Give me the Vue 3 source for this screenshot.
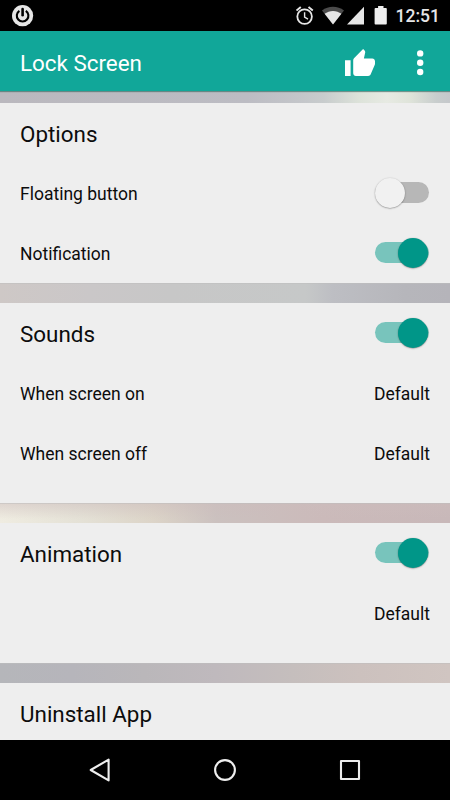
<script setup>

    import { reactive } from 'vue';

    const secciones = reactive([
        {
            clase: 'seccion--opciones',
            titulo: 'Options',
            filas: [
                { texto: 'Floating button', activo: false },
                { texto: 'Notification', activo: true }
            ]
        },
        {
            clase: 'seccion--sonidos',
            titulo: 'Sounds',
            activo: true,
            filas: [
                { texto: 'When screen on', valor: 'Default' },
                { texto: 'When screen off', valor: 'Default' }
            ]
        },
        {
            clase: 'seccion--animacion',
            titulo: 'Animation',
            activo: true,
            filas: [
                { texto: '', valor: 'Default' }
            ]
        },
        {
            clase: 'seccion--desinstalar',
            titulo: 'Uninstall App',
            filas: []
        }
    ]);

    function cambiar(item){
        item.activo = !item.activo;
    }

</script>
<template>
    <div class="pantalla">
        <div class="estado">
            <svg class="estado__power" width="22" height="22" viewBox="0 0 22 22">
                <circle cx="10.6" cy="10.7" r="10.6" fill="#e6e6e6" />
                <path d="M7.4 5.9A5.8 5.8 0 1 0 13.8 5.9" fill="none" stroke="#000" stroke-width="2.1" />
                <path d="M10.6 4V10.2" stroke="#000" stroke-width="2.6" stroke-linecap="round" />
            </svg>
            <div class="estado__iconos">
                <svg width="18" height="19" viewBox="0 0 18 19" fill="none" stroke="#e6e6e6">
                    <circle cx="8.6" cy="10.6" r="7.3" stroke-width="1.8" />
                    <path d="M8.6 6.2V11L12 13.1" stroke-width="1.4" />
                    <path d="M.5 4.5L4.8 .9M16.8 4.5L12.5 .9" stroke-width="1.9" />
                </svg>
                <svg class="estado__wifi" width="22" height="19" viewBox="0 0 22 19">
                    <path d="M0 4.4C6.4-.6 15.6-.6 22 4.4L11 18.2Z" fill="#4b4b4b" />
                    <path d="M2.6 7.8C7.4 3.9 14.6 3.9 19.4 7.8L11 18.4Z" fill="#e6e6e6" />
                </svg>
                <svg class="estado__red" width="18" height="19" viewBox="0 0 18 19">
                    <path d="M17 .8V18.6H0Z" fill="#e6e6e6" />
                </svg>
                <svg class="estado__bateria" width="14" height="19" viewBox="0 0 14 19">
                    <path d="M4.1 0H9.5V2H12Q12.8 2 12.8 3V17.6Q12.8 18.6 12 18.6H1.5Q.6 18.6 .6 17.6V3Q.6 2 1.5 2H4.1Z" fill="#eee" />
                </svg>
                <span class="estado__hora">12:51</span>
            </div>
        </div>
        <div class="barra">
            <h1>Lock Screen</h1>
            <svg class="barra__like" width="30" height="28" viewBox="0 0 30 28" fill="#fff">
                <path d="M0 11.2H5.6V27H0ZM30 12.3C30 10.8 28.8 9.6 27.3 9.6H18.9L20.2 3.4V3C20.2 2.4 20 1.9 19.6 1.5L18.1 0L9 9.3C8.5 9.8 8.2 10.5 8.2 11.2V24.3C8.2 25.8 9.4 27 10.9 27H23.2C24.3 27 25.3 26.3 25.7 25.3L29.8 15.7C29.9 15.4 30 15.1 30 14.7Z" />
            </svg>
            <svg class="barra__menu" width="8" height="28" viewBox="0 0 8 28" fill="#fff">
                <circle cx="4.2" cy="4.4" r="3.2" />
                <circle cx="4.2" cy="13.7" r="3.2" />
                <circle cx="4.2" cy="23" r="3.2" />
            </svg>
        </div>
        <div class="contenido">
            <template v-for="sec in secciones" :key="sec.titulo">
                <div class="franja" :class="sec.clase + '-franja'"></div>
                <div class="seccion" :class="sec.clase">
                    <div class="fila">
                        <h2>{{ sec.titulo }}</h2>
                        <button
                            v-if="sec.activo !== undefined" class="switch"
                            :class="{ 'switch--activo': sec.activo }" @click="cambiar(sec)"
                            ></button>
                    </div>
                    <div class="fila" v-for="(fila, i) in sec.filas" :key="i">
                        <span>{{ fila.texto }}</span>
                        <span v-if="fila.valor">{{ fila.valor }}</span>
                        <button
                            v-else class="switch"
                            :class="{ 'switch--activo': fila.activo }" @click="cambiar(fila)"
                            ></button>
                    </div>
                </div>
            </template>
        </div>
        <div class="navegacion">
            <svg width="24" height="26" viewBox="0 0 24 26">
                <path d="M20.6 2.6V23.4L2.7 13Z" fill="none" stroke="#eee" stroke-width="2.1" stroke-linejoin="round" />
            </svg>
            <svg width="24" height="26" viewBox="0 0 24 26">
                <circle cx="12" cy="13" r="9.9" fill="none" stroke="#eee" stroke-width="2.1" />
            </svg>
            <svg width="24" height="26" viewBox="0 0 24 26">
                <rect x="3" y="4" width="18" height="18" fill="none" stroke="#eee" stroke-width="2.1" stroke-linejoin="round" />
            </svg>
        </div>
    </div>
</template>
<style>
    body{
        margin: 0;
        background-color: #000;
    }
</style>
<style scoped>
    .pantalla{
        display: flex;
        flex-direction: column;
        width: 450px;
        height: 800px;
        overflow: hidden;
        font-family: Roboto, "Liberation Sans", sans-serif;
        font-size: 17.5px;
        color: #0c0c0c;
    }
    svg{
        display: block;
        flex: none;
    }
    .estado{
        display: flex;
        justify-content: space-between;
        flex: none;
        box-sizing: border-box;
        height: 31px;
        padding: 5px 10px 0 12px;
        background-color: #000;
    }
    .estado__iconos{
        display: flex;
        align-items: flex-start;
        padding-top: 1px;
    }
    .estado__wifi{
        margin-left: 8px;
    }
    .estado__red{
        margin-left: 3px;
    }
    .estado__bateria{
        margin-left: 9px;
    }
    .estado__hora{
        margin-left: 8px;
        font-size: 17.5px;
        font-weight: 500;
        line-height: 21px;
        color: #e6e6e6;
    }
    .barra{
        position: relative;
        display: flex;
        align-items: center;
        flex: none;
        box-sizing: border-box;
        height: 60px;
        padding: 4px 26px 0 20px;
        background-color: #11a799;
        box-shadow: 0 1px 1px rgba(0, 70, 60, .45);
    }
    .barra h1{
        flex: 1;
        margin: 0;
        font-size: 22.4px;
        font-weight: 400;
        color: #fff;
    }
    .barra__menu{
        margin-left: 41px;
    }
    .contenido{
        flex: 1;
        min-height: 0;
        overflow: hidden;
    }
    .franja{
        height: 20px;
        box-shadow: inset 0 1px 0 rgba(190, 190, 190, .5);
    }
    .seccion--opciones-franja{
        height: 12px;
        background: linear-gradient(90deg, #bab8be 0, #bcbcc3 55%, #c3c5c9 66%, #c8cccd 72%, #dde3da 80%, #e7eae3 86%, #dfe4da 91%, #c8cdcd 97%, #c5c8cb 100%);
    }
    .seccion--sonidos-franja{
        background: linear-gradient(90deg, #cec8c6 0, #cac7c8 20%, #c7c7c7 38%, #c6c8c8 68%, #bdbec3 74%, #b6b6bb 90%, #b5b4ba 100%);
    }
    .seccion--animacion-franja{
        background:
            linear-gradient(180deg, rgba(204, 188, 188, .5) 0, rgba(204, 188, 188, 0) 80%),
            linear-gradient(90deg, #efece1 0, #e4e1d6 18%, #dcd4c8 34%, #cbc1bf 48%, #cbbaba 72%, #c8b8b9 100%);
    }
    .seccion--desinstalar-franja{
        background: linear-gradient(90deg, #b5b6ba 0, #b6b5bb 16%, #bab7ba 32%, #bfb9bd 48%, #c5bebd 65%, #ccc1be 80%, #d0c5c1 100%);
    }
    .seccion{
        background-color: #eee;
    }
    .seccion--opciones{
        height: 180px;
    }
    .seccion--sonidos{
        height: 200px;
    }
    .seccion--animacion{
        height: 140px;
    }
    .seccion--desinstalar{
        height: 60px;
    }
    .fila{
        display: flex;
        align-items: center;
        justify-content: space-between;
        box-sizing: border-box;
        height: 60px;
        padding: 1px 20px 0;
    }
    .fila h2{
        margin: 0;
        font-size: 22.4px;
        font-weight: 400;
    }
    .switch{
        position: relative;
        width: 54px;
        height: 21px;
        margin: 0 .7px 2px 0;
        padding: 0;
        border: none;
        border-radius: 11px;
        background-color: #b7b7b7;
    }
    .switch::after{
        content: "";
        position: absolute;
        top: -4.5px;
        left: 0;
        width: 30px;
        height: 30px;
        border-radius: 50%;
        background-color: #f1f1f1;
        box-shadow: 0 .5px 1.5px rgba(0, 0, 0, .45);
    }
    .switch--activo{
        background-color: #78c4bc;
    }
    .switch--activo::after{
        left: 23px;
        background-color: #009688;
    }
    .navegacion{
        display: flex;
        align-items: center;
        justify-content: center;
        gap: 101px;
        flex: none;
        height: 60px;
        background-color: #000;
    }
</style>
